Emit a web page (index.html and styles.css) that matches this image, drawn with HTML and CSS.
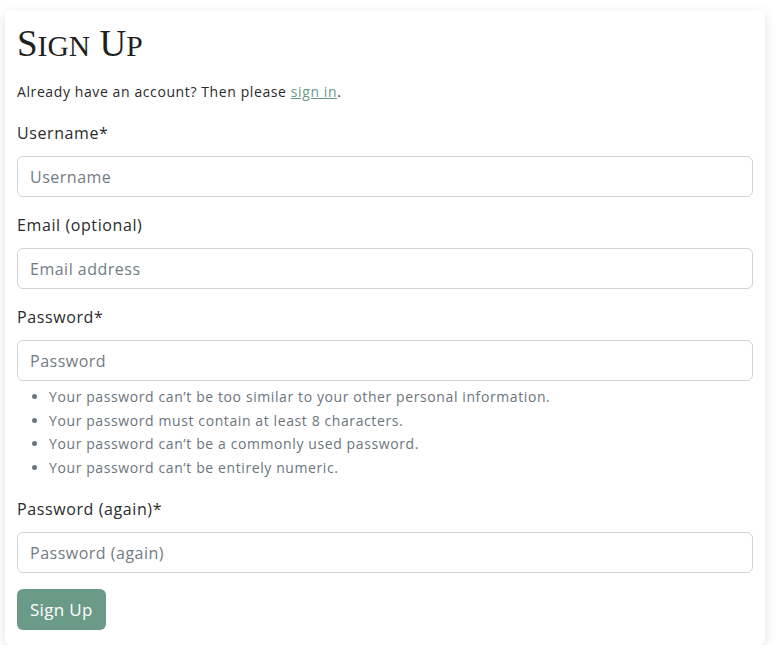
FILE: index.html
```html
<!DOCTYPE html>
<html lang="en">
<head>
<meta charset="utf-8">
<title>Sign Up</title>
<link rel="stylesheet" href="styles.css">
</head>
<body>
<main class="card">
  <h1 class="title">S<span class="sc">ign</span> U<span class="sc">p</span></h1>
  <p class="lead">Already have an account? Then please <a href="#" class="link">sign in</a>.</p>
  <form class="form">
    <div class="field">
      <label class="label" for="u">Username*</label>
      <input class="input" id="u" type="text" placeholder="Username">
    </div>
    <div class="field">
      <label class="label" for="e">Email (optional)</label>
      <input class="input" id="e" type="email" placeholder="Email address">
    </div>
    <div class="field">
      <label class="label" for="p1">Password*</label>
      <input class="input" id="p1" type="password" placeholder="Password">
      <ul class="help">
        <li>Your password can’t be too similar to your other personal information.</li>
        <li>Your password must contain at least 8 characters.</li>
        <li>Your password can’t be a commonly used password.</li>
        <li>Your password can’t be entirely numeric.</li>
      </ul>
    </div>
    <div class="field">
      <label class="label" for="p2">Password (again)*</label>
      <input class="input" id="p2" type="password" placeholder="Password (again)">
    </div>
    <button class="btn" type="button">Sign Up</button>
  </form>
</main>
</body>
</html>
```
FILE: styles.css
```css
* { box-sizing: border-box; }
html, body { margin: 0; background: #ffffff; }
body {
  padding: 10px 11px 0 5px;
  font-family: "Open Sans", "Noto Sans", sans-serif;
  color: #2b2b2b;
}
.card {
  background: #fff;
  border-radius: 5px;
  box-shadow: 0 3px 12px rgba(0,0,0,0.12);
  padding: 12px 12px 15px 12px;
}
.title {
  margin: 0 0 13px 0;
  font-family: "Liberation Serif", serif;
  font-weight: normal;
  font-size: 37px;
  line-height: 43px;
  text-transform: uppercase;
  letter-spacing: 0;
  color: #1f1f1f;
}
.sc { font-size: 0.8em; }
.lead {
  margin: 0 0 19px 0;
  font-size: 14px;
  line-height: 21px;
  letter-spacing: 0.6px;
}
.link { color: #6a9a89; text-decoration: underline; }
.form { display: flex; flex-direction: column; }
.field { display: flex; flex-direction: column; margin-bottom: 16px; }
.label {
  font-size: 16px;
  line-height: 24px;
  margin-bottom: 11px;
  letter-spacing: 0.6px;
}
.input {
  height: 41px;
  width: 100%;
  border: 1px solid #ced4da;
  border-radius: 6px;
  padding: 0 12px;
  font-family: inherit;
  font-size: 16px;
  letter-spacing: 0.5px;
  color: #333;
}
.input::placeholder { color: #737b84; }
.help {
  margin: 4px 0 2px 0;
  padding-left: 32px;
  font-size: 14px;
  line-height: 23.5px;
  letter-spacing: 0.6px;
  color: #6c757d;
}
.btn {
  align-self: flex-start;
  margin-top: 0;
  height: 41px;
  padding: 0 13px;
  border: none;
  border-radius: 6px;
  background: #6b9a89;
  color: #fff;
  font-family: inherit;
  font-size: 17px;
  letter-spacing: 0.3px;
}
```
